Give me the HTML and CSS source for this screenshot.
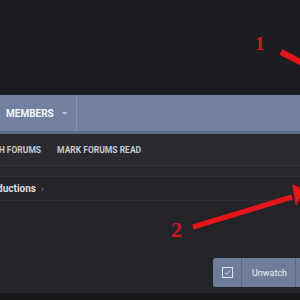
FILE: index.html
```html
<!DOCTYPE html>
<html>
<head>
        <title>Forum thread</title>

        <link rel="stylesheet" href="styles.css">
</head>

<body>
        <!--Dark header area-->
        <div class="header"></div>

        <!--Main navigation-->
        <div class="navbar">
                <div class="nav_item">
                        <span>MEMBERS</span>
                        <span class="caret"></span>
                </div>
                <div class="nav_divider"></div>
        </div>

        <!--Sub navigation-->
        <div class="subnav">
                <a class="subnav_link">SEARCH FORUMS</a>
                <a class="subnav_link">MARK FORUMS READ</a>
        </div>
        <div class="strip"></div>

        <!--Breadcrumb-->
        <div class="breadcrumb">
                <span class="crumb">Introductions</span>
                <span class="crumb_arrow">&rsaquo;</span>
        </div>

        <!--Page body-->
        <div class="content">
                <div class="actions">
                        <button class="btn btn_check">
                                <svg width="11" height="11" viewBox="0 0 11 11">
                                        <rect x="0.5" y="0.5" width="10" height="10" fill="none" stroke="#dfe3ec" stroke-width="1"/>
                                        <path d="M2.8 5.6 L4.6 7.3 L8.2 3.4" fill="none" stroke="#dfe3ec" stroke-width="1"/>
                                </svg>
                        </button>
                        <button class="btn">Unwatch</button>
                        <button class="btn btn_more"></button>
                </div>
        </div>
        <div class="footer"></div>

        <!--Red annotations drawn over the screenshot-->
        <span class="mark mark_one">1</span>
        <span class="mark mark_two">2</span>
        <svg class="arrows" width="300" height="300" viewBox="0 0 300 300">
                <line x1="281" y1="52" x2="306" y2="65" stroke="#e8141c" stroke-width="6"/>
                <line x1="193" y1="227" x2="292" y2="197" stroke="#e8141c" stroke-width="5"/>
                <polygon points="292,184 304,190 296,206" fill="#e8141c"/>
        </svg>
</body>

</html>
```

FILE: styles.css
```css
body {
    margin: 0;
    width: 300px;
    height: 300px;
    overflow: hidden;
    position: relative;
    background-color: #232427;
    font-family: Roboto, "Liberation Sans", sans-serif;
}

/* Header */
.header {
    height: 95px;
    background-color: #1b1c1f;
}

/* Main navigation */
.navbar {
    height: 36px;
    background-color: #7281a0;
    border-bottom: 3px solid #5f6c88;
    display: flex;
    align-items: stretch;
}
.nav_item {
    display: flex;
    align-items: center;
    gap: 8px;
    padding: 0 8px 0 6px;
    color: #f4f5f8;
    font-size: 10px;
    font-weight: bold;
}
.caret {
    width: 0;
    height: 0;
    border-left: 3px solid transparent;
    border-right: 3px solid transparent;
    border-top: 3px solid #b9c0d2;
    margin-top: 1px;
}
.nav_divider {
    width: 1px;
    background-color: #8794b0;
}

/* Sub navigation */
.subnav {
    height: 31px;
    background-color: #2a2b2f;
    border-bottom: 1px solid #34353a;
    display: flex;
    align-items: center;
    gap: 16px;
    margin-left: -28px;
}
.subnav_link {
    color: #c9cacd;
    font-size: 8.5px;
    font-weight: bold;
}
.strip {
    height: 10px;
    background-color: #27282c;
    border-bottom: 1px solid #323338;
}

/* Breadcrumb */
.breadcrumb {
    height: 23px;
    background-color: #242529;
    border-bottom: 1px solid #2d2e32;
    display: flex;
    align-items: center;
    gap: 5px;
    margin-left: -24px;
}
.crumb {
    color: #dcdde0;
    font-size: 10px;
    font-weight: bold;
}
.crumb_arrow {
    color: #8d8f94;
    font-size: 9px;
}

/* Content */
.content {
    height: 91px;
    display: flex;
    justify-content: flex-end;
    align-items: flex-end;
    padding-bottom: 1px;
}
.actions {
    display: flex;
    height: 29px;
    margin-right: -30px;
    margin-bottom: 5px;
}
.btn {
    width: 54px;
    background-color: #6f7d9b;
    border: none;
    border-right: 1px solid #5d6883;
    color: #eef0f5;
    font-family: Roboto, "Liberation Sans", sans-serif;
    font-size: 9px;
    padding: 0 10px;
}
.btn_check {
    width: 29px;
    border-radius: 3px 0 0 3px;
    display: flex;
    align-items: center;
    justify-content: center;
    padding: 0;
}
.btn_check svg {
    display: block;
}
.btn_more {
    width: 34px;
}

.footer {
    height: 10px;
    background-color: #17181a;
}

/* Annotations */
.mark {
    position: absolute;
    color: #d9141c;
    font-family: "Liberation Serif", serif;
    font-weight: bold;
    line-height: 1;
}
.mark_one {
    left: 255px;
    top: 34px;
    font-size: 19px;
}
.mark_two {
    left: 171px;
    top: 219px;
    font-size: 22px;
}
.arrows {
    position: absolute;
    left: 0;
    top: 0;
}
```
